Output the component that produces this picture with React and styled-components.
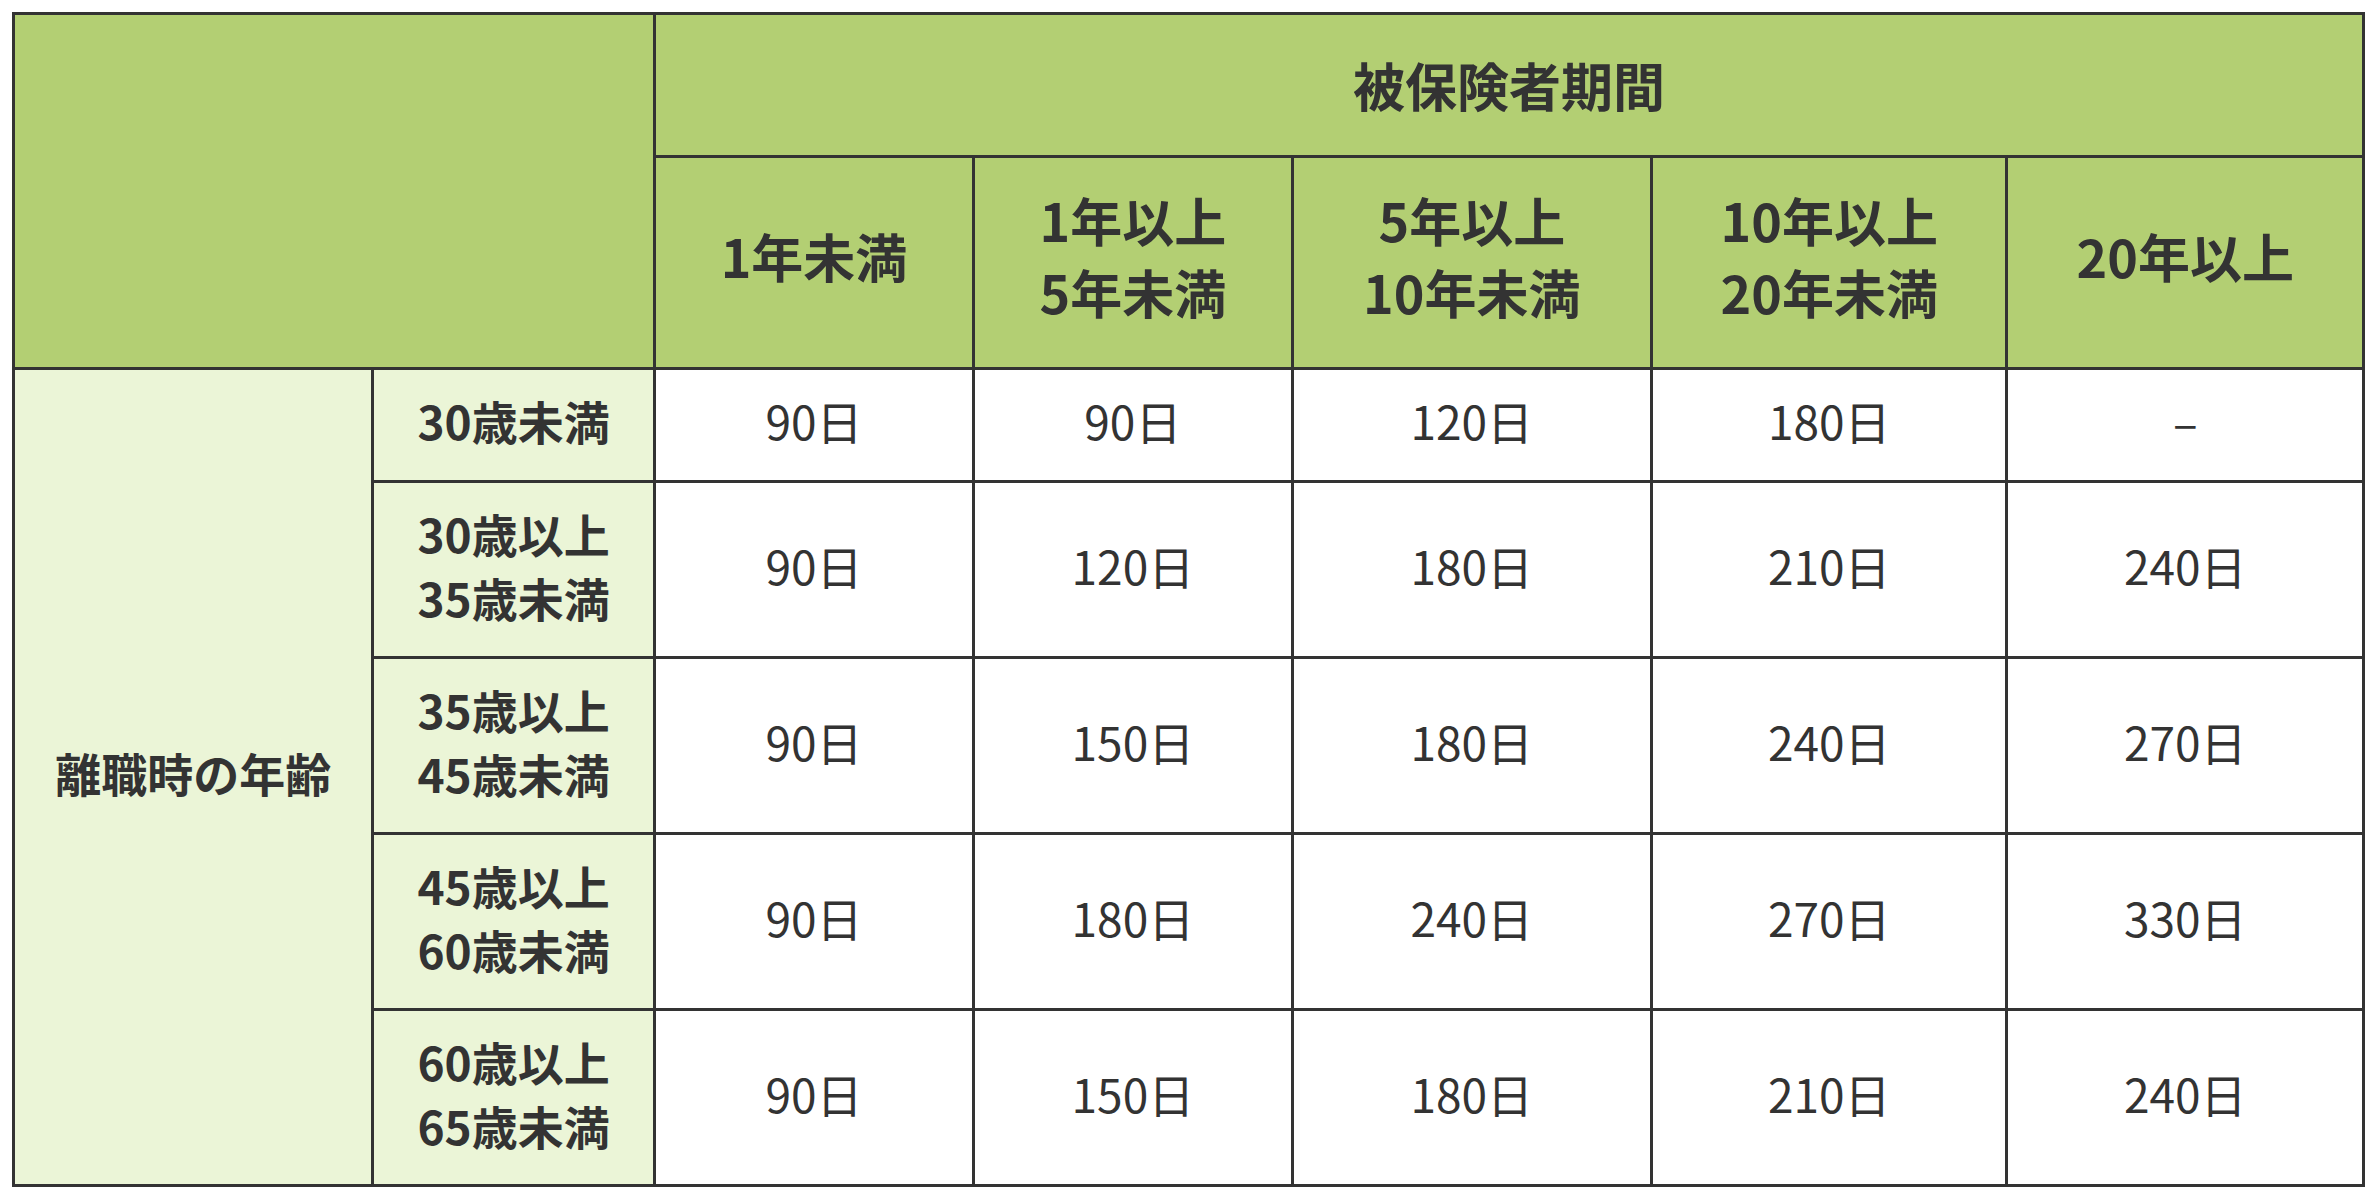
import React from 'react'
import styled, { createGlobalStyle } from 'styled-components'

const GlobalStyle = createGlobalStyle`
    html, body{
        margin: 0;
        padding: 0;
        background: #fff;
    }
    body{
        font-family: 'Noto Sans CJK JP', 'Noto Sans', sans-serif;
        color: #333;
    }
`

const Wrap = styled.div`
    padding: 12px 0 0 12px;
`

const Table = styled.table`
    border-collapse: separate;
    border-spacing: 0;
    table-layout: fixed;
    width: 2353px;
    border-top: 3px solid #333;
    border-left: 3px solid #333;

    th, td{
        box-sizing: border-box;
        border-right: 3px solid #333;
        border-bottom: 3px solid #333;
        text-align: center;
        vertical-align: middle;
        padding: 0;
        line-height: 1.38;
    }
`

const Row = styled.tr`
    height: ${({h}) => h}px;
`

const HeadCell = styled.th`
    background: #b3cf73;
    font-size: 52px;
    font-weight: 700;
    padding-bottom: ${({lift}) => lift || 0}px !important;
`

const SideCell = styled.th`
    background: #ebf5d7;
    font-size: 46px;
    font-weight: 700;
    padding-bottom: 8px !important;
`

const DataCell = styled.td`
    background: #fff;
    font-size: 46px;
    font-weight: 400;
    padding-bottom: 8px !important;
`

const widths = [359, 281, 319, 318, 359, 355, 356]

const periods = [
    ['1年未満'],
    ['1年以上', '5年未満'],
    ['5年以上', '10年未満'],
    ['10年以上', '20年未満'],
    ['20年以上'],
]

const rows = [
    {age: ['30歳未満'], days: ['90日', '90日', '120日', '180日', '–'], h: 113},
    {age: ['30歳以上', '35歳未満'], days: ['90日', '120日', '180日', '210日', '240日'], h: 176},
    {age: ['35歳以上', '45歳未満'], days: ['90日', '150日', '180日', '240日', '270日'], h: 176},
    {age: ['45歳以上', '60歳未満'], days: ['90日', '180日', '240日', '270日', '330日'], h: 176},
    {age: ['60歳以上', '65歳未満'], days: ['90日', '150日', '180日', '210日', '240日'], h: 176},
]

const Lines = ({lines}) => lines.map((l, i) => (
    <React.Fragment key={i}>
        {i > 0 && <br />}
        {l}
    </React.Fragment>
))

const App = () => {
    return(
        <Wrap>
            <GlobalStyle />
            <Table>
                <colgroup>
                    {widths.map((w, i) => <col key={i} style={{width: w}} />)}
                </colgroup>
                <thead>
                    <Row h={143}>
                        <HeadCell colSpan={2} rowSpan={2}></HeadCell>
                        <HeadCell colSpan={5}>被保険者期間</HeadCell>
                    </Row>
                    <Row h={212}>
                        {periods.map((p, i) => (
                            <HeadCell key={i} lift={14}><Lines lines={p} /></HeadCell>
                        ))}
                    </Row>
                </thead>
                <tbody>
                    {rows.map((r, i) => (
                        <Row h={r.h} key={i}>
                            {i === 0 && <SideCell rowSpan={rows.length}>離職時の年齢</SideCell>}
                            <SideCell><Lines lines={r.age} /></SideCell>
                            {r.days.map((d, j) => <DataCell key={j}>{d}</DataCell>)}
                        </Row>
                    ))}
                </tbody>
            </Table>
        </Wrap>
    )
}

export default App
